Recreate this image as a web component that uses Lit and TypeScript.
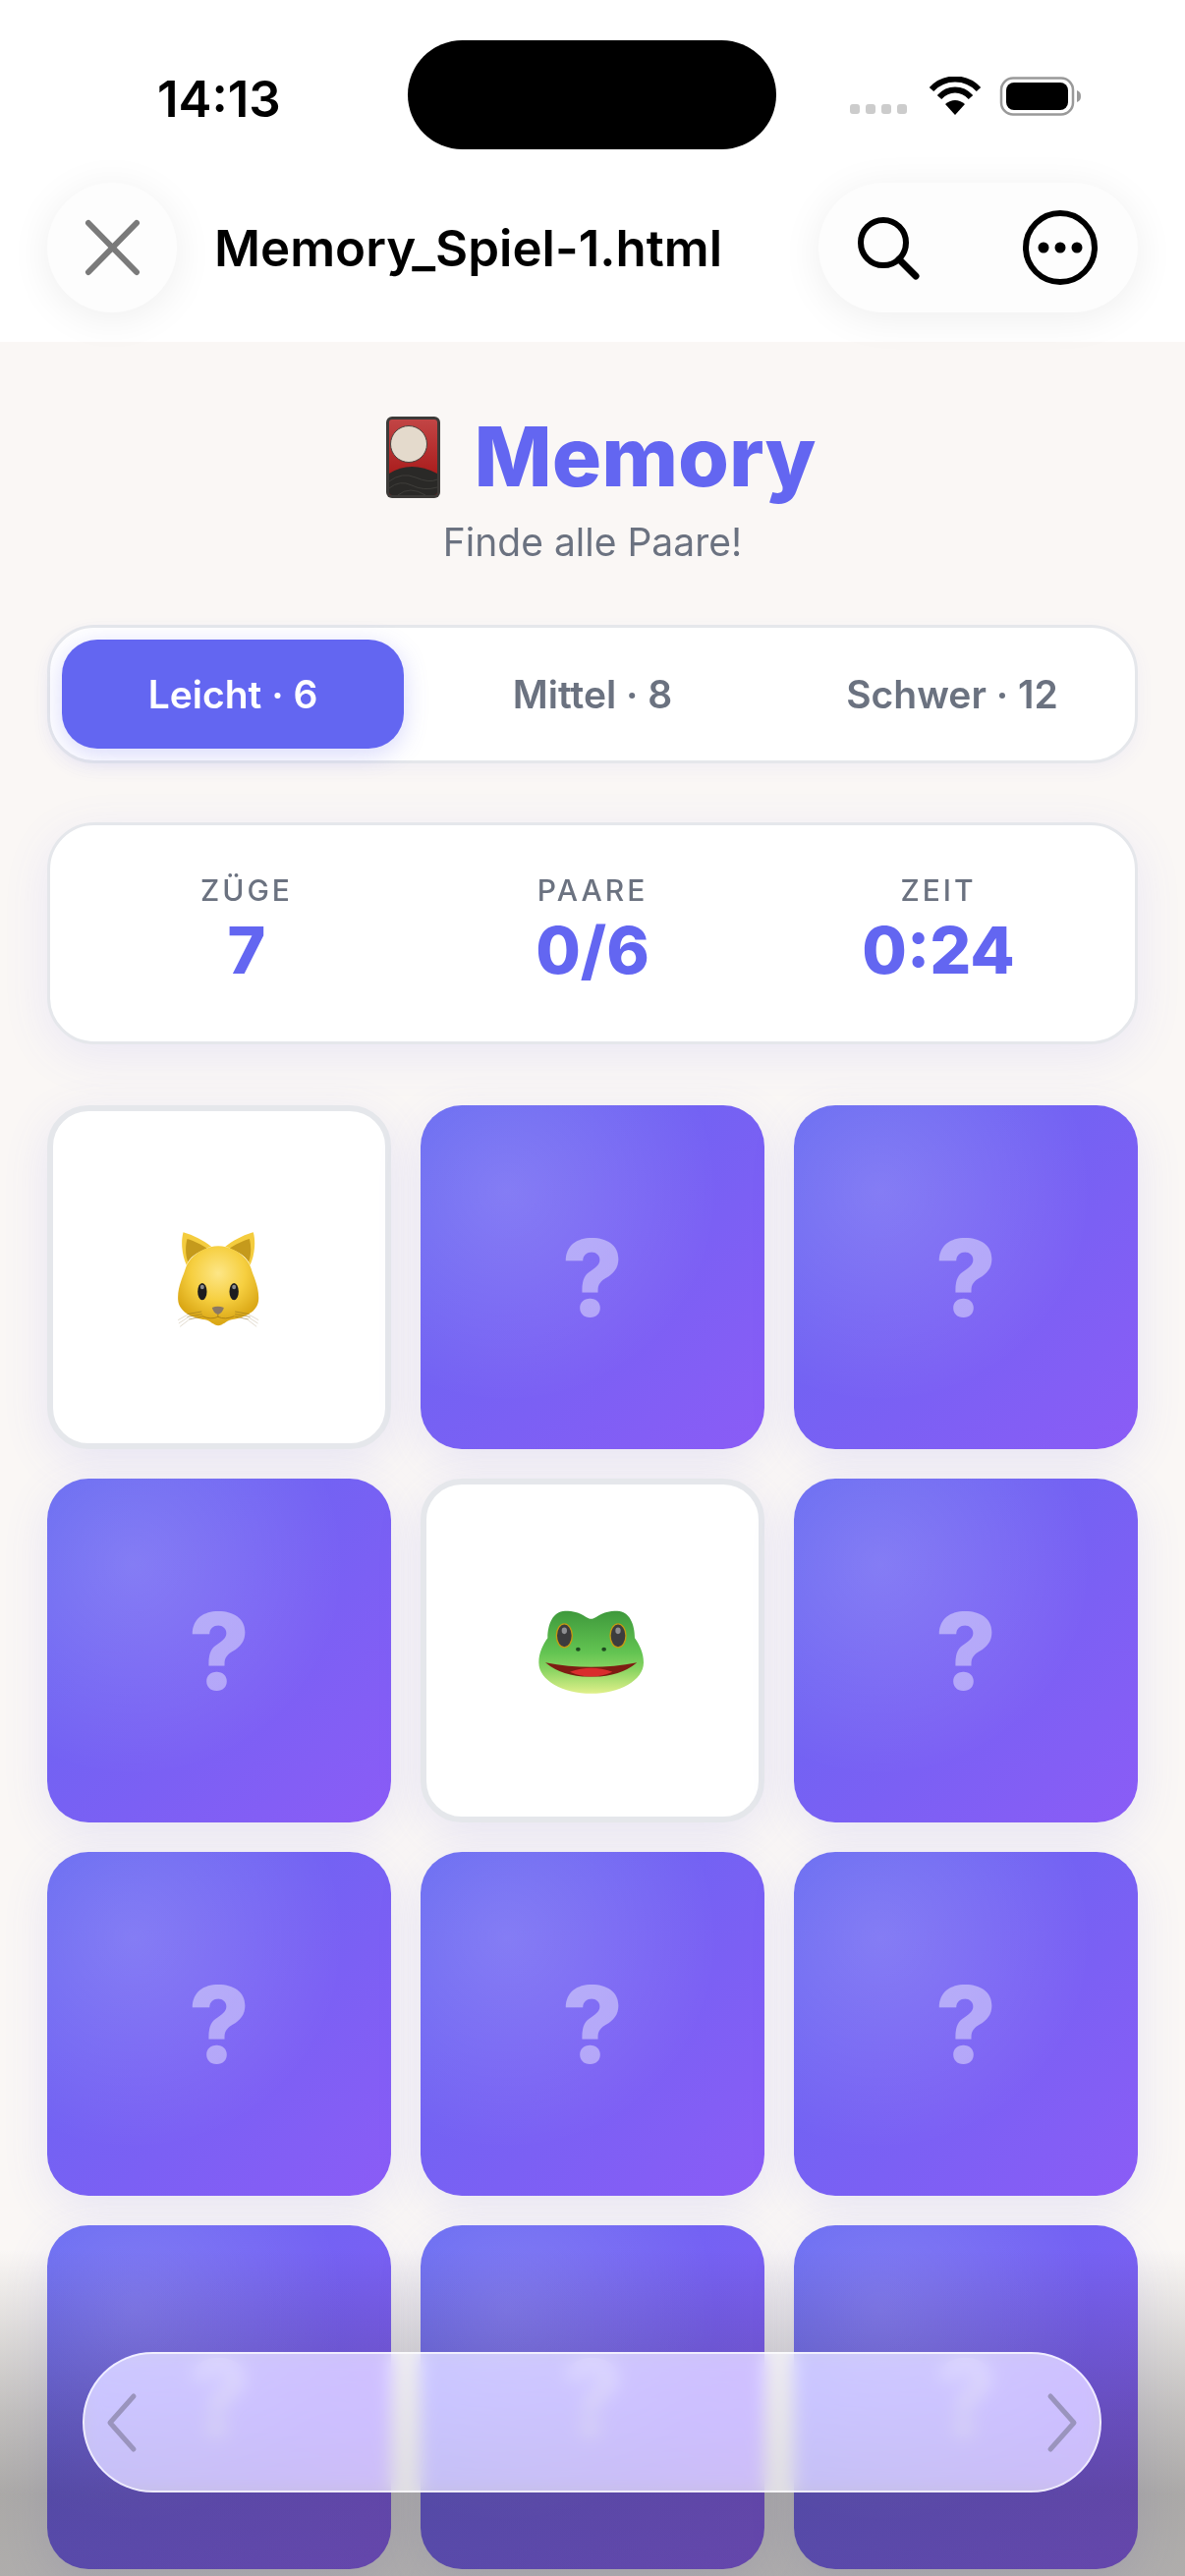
import { LitElement, css, html, svg } from "lit";
import { customElement } from "lit/decorators.js";

type Card = "back" | "cat" | "frog";

const CARDS: Card[] = ["cat", "back", "back", "back", "frog", "back", "back", "back", "back", "back", "back", "back"];
const TABS = ["Leicht · 6", "Mittel · 8", "Schwer · 12"];
const STATS = [
  { label: "ZÜGE", value: "7" },
  { label: "PAARE", value: "0/6" },
  { label: "ZEIT", value: "0:24" }
];

const hanafuda = html`<svg class="flower" viewBox="0 0 55 83">
  <defs>
    <linearGradient id="red" x1="0" y1="0" x2="0" y2="1">
      <stop offset="0" stop-color="#c24545" />
      <stop offset="0.7" stop-color="#ab1e1e" />
    </linearGradient>
  </defs>
  <rect width="55" height="83" rx="6" fill="#3c3a38" />
  <rect x="3" y="3" width="49" height="77" rx="3" fill="url(#red)" />
  <circle cx="23" cy="28" r="18.5" fill="#e4dacc" stroke="#4b4541" stroke-width="1" />
  <path d="M3 58Q25 44 52 58V77Q52 80 49 80H6Q3 80 3 77Z" fill="#2a2927" />
  <path d="M3 66Q16 56 30 62T52 64M3 73Q14 64 26 70T52 72M12 80Q24 70 40 80" fill="none" stroke="#44423f" stroke-width="0.8" />
</svg>`;

const cat = svg`<svg class="emoji" viewBox="7.5 27 480 480">
  <defs>
    <radialGradient id="catHead" gradientUnits="userSpaceOnUse" cx="245" cy="255" r="150">
      <stop offset="0" stop-color="#fde687" />
      <stop offset="0.55" stop-color="#f6cf40" />
      <stop offset="1" stop-color="#dba816" />
    </radialGradient>
  </defs>
  <path d="M138 130C168 138 200 155 224 174C190 180 160 200 148 230C134 200 130 160 138 130Z" fill="#f4cc3e" />
  <path d="M352 130C322 138 290 155 266 174C300 180 330 200 342 230C356 200 360 160 352 130Z" fill="#f4cc3e" />
  <path d="M150 150C170 156 195 168 212 180C185 188 165 200 152 220C144 198 144 172 150 150Z" fill="#c59a1c" />
  <path d="M340 150C320 156 295 168 278 180C305 188 325 200 338 220C346 198 346 172 340 150Z" fill="#c59a1c" />
  <path d="M245 172C290 172 335 205 345 240C352 265 370 295 368 335C366 375 320 392 285 397C270 400 258 415 245 415C232 415 220 400 205 397C170 392 124 375 122 335C120 295 138 265 145 240C155 205 200 172 245 172Z" fill="url(#catHead)" />
  <ellipse cx="196" cy="311" rx="14" ry="26" fill="#1d1d1f" />
  <ellipse cx="293" cy="311" rx="14" ry="26" fill="#1d1d1f" />
  <ellipse cx="196" cy="297" rx="6" ry="7" fill="#8d8d90" />
  <ellipse cx="293" cy="297" rx="6" ry="7" fill="#8d8d90" />
  <path d="M226 360Q243 352 262 360Q258 376 244 381Q230 376 226 360Z" fill="#8b7864" />
  <path d="M244 381V388M196 386Q222 398 244 388Q266 398 294 386" fill="none" stroke="#a27a14" stroke-width="2.5" />
  <path d="M150 380L194 372M150 388L196 380M155 396L196 387M296 372L340 380M296 380L342 388M296 387L337 396" stroke="#8a6d22" stroke-width="1.6" fill="none" />
  <path d="M122 398L150 382M124 408L152 390M128 418L154 398M368 398L340 382M366 408L338 390M362 418L336 398" stroke="#c8bba2" stroke-width="1.6" fill="none" />
</svg>`;

const frog = svg`<svg class="emoji" viewBox="9 -31.5 480 480">
  <defs>
    <linearGradient id="frogSkin" gradientUnits="userSpaceOnUse" x1="0" y1="90" x2="0" y2="340">
      <stop offset="0" stop-color="#3f9a3c" />
      <stop offset="0.5" stop-color="#63c452" />
      <stop offset="0.72" stop-color="#8cd563" />
      <stop offset="1" stop-color="#e0f08a" />
    </linearGradient>
  </defs>
  <path d="M245 112C262 112 272 88 325 88C362 88 378 130 378 170C392 190 405 215 405 245C405 300 330 340 245 340C160 340 85 300 85 245C85 215 98 190 112 170C112 130 128 88 165 88C218 88 228 112 245 112Z" fill="url(#frogSkin)" />
  <ellipse cx="163" cy="163" rx="24" ry="36" fill="#3c3c3e" stroke="#c59a12" stroke-width="4" />
  <ellipse cx="327" cy="163" rx="24" ry="36" fill="#3c3c3e" stroke="#c59a12" stroke-width="4" />
  <ellipse cx="163" cy="148" rx="8" ry="10" fill="#8f8f92" />
  <ellipse cx="327" cy="148" rx="8" ry="10" fill="#8f8f92" />
  <ellipse cx="205" cy="205" rx="7" ry="6" fill="#1f4a20" />
  <ellipse cx="284" cy="205" rx="7" ry="6" fill="#1f4a20" />
  <path d="M105 245Q245 272 385 245Q330 290 245 288Q160 290 105 245Z" fill="#7e1c12" />
  <path d="M180 274Q245 250 310 274Q280 288 245 288Q210 288 180 274Z" fill="#d92d2d" />
</svg>`;

@customElement("app-root")
export class AppRoot extends LitElement {
  static styles = css`
    :host {
      display: block;
      position: relative;
      width: 1206px;
      height: 2622px;
      overflow: hidden;
      background: #faf7f5;
      font-family: Inter, "Liberation Sans", sans-serif;
    }
    svg {
      display: block;
    }
    .top {
      height: 348px;
      box-sizing: border-box;
      background: #fff;
      padding: 41px 48px 0;
    }
    .status {
      display: flex;
      align-items: flex-start;
      height: 111px;
    }
    .time {
      width: 367px;
      padding: 29px 0 0 112px;
      box-sizing: border-box;
      font-size: 51px;
      line-height: 62px;
      font-weight: 600;
      color: #000;
    }
    .island {
      width: 375px;
      height: 111px;
      border-radius: 56px;
      background: #000;
    }
    .indicators {
      display: flex;
      padding: 37px 0 0 75px;
      gap: 0;
    }
    .nav {
      display: flex;
      align-items: center;
      margin-top: 34px;
    }
    .round {
      width: 132px;
      height: 132px;
      border-radius: 66px;
      background: #fdfdfd;
      box-shadow: 0 6px 42px rgba(0, 0, 0, 0.07);
      display: flex;
      align-items: center;
      justify-content: center;
    }
    .file {
      flex: 1;
      margin-left: 38px;
      font-size: 51px;
      font-weight: 600;
      color: #000;
    }
    .actions {
      width: 325px;
      height: 132px;
      border-radius: 66px;
      background: #fdfdfd;
      box-shadow: 0 6px 42px rgba(0, 0, 0, 0.07);
      display: flex;
      align-items: center;
      justify-content: space-between;
      box-sizing: border-box;
      padding: 0 41px 0 38px;
    }
    .page {
      padding: 66px 48px 0;
    }
    .heading {
      text-align: center;
    }
    h1 {
      margin: 0;
      display: flex;
      justify-content: center;
      align-items: center;
      gap: 34px;
      font-size: 84px;
      line-height: 102px;
      font-weight: 800;
      color: #6366f1;
      padding-left: 18px;
    }
    .flower {
      width: 55px;
      height: 83px;
    }
    .sub {
      margin-top: 12px;
      font-size: 39px;
      line-height: 48px;
      color: #6b7280;
    }
    .tabs {
      margin-top: 60px;
      display: grid;
      grid-template-columns: repeat(3, 1fr);
      gap: 18px;
      padding: 12px;
      height: 141px;
      box-sizing: border-box;
      background: #fff;
      border: 3px solid #e5e7eb;
      border-radius: 48px;
      box-shadow: 0 6px 18px rgba(99, 102, 241, 0.06);
    }
    .tab {
      display: flex;
      align-items: center;
      justify-content: center;
      border-radius: 36px;
      font-size: 39px;
      font-weight: 600;
      color: #6b7280;
    }
    .tab.on {
      background: #6366f1;
      color: #fff;
      box-shadow: 0 6px 24px rgba(99, 102, 241, 0.25);
    }
    .stats {
      margin-top: 60px;
      display: grid;
      grid-template-columns: repeat(3, 1fr);
      gap: 48px;
      height: 226px;
      box-sizing: border-box;
      padding: 48px;
      background: #fff;
      border: 3px solid #e5e7eb;
      border-radius: 48px;
      box-shadow: 0 12px 48px rgba(99, 102, 241, 0.1);
      text-align: center;
    }
    .label {
      font-size: 30px;
      line-height: 36px;
      font-weight: 500;
      letter-spacing: 3px;
      color: #6b7280;
    }
    .value {
      margin-top: 3px;
      font-size: 66px;
      line-height: 80px;
      font-weight: 800;
      color: #6366f1;
    }
    .board {
      margin-top: 62px;
      display: grid;
      grid-template-columns: repeat(3, 350px);
      grid-auto-rows: 350px;
      gap: 30px;
    }
    .card {
      display: flex;
      align-items: center;
      justify-content: center;
      box-sizing: border-box;
      border-radius: 42px;
      box-shadow: 0 12px 48px rgba(99, 102, 241, 0.12);
    }
    .card.back {
      background: radial-gradient(circle at 25% 25%, rgba(255, 255, 255, 0.16), rgba(255, 255, 255, 0) 58%),
        linear-gradient(135deg, #6366f1, #8b5cf6);
      font-size: 108px;
      font-weight: 800;
      color: rgba(255, 255, 255, 0.42);
    }
    .card.open {
      background: #fff;
      border: 6px solid #e5e7eb;
    }
    .emoji {
      width: 160px;
      height: 160px;
    }
    .fade {
      position: absolute;
      left: 0;
      right: 0;
      bottom: 0;
      height: 332px;
      background: linear-gradient(
        to bottom,
        rgba(30, 30, 30, 0),
        rgba(30, 30, 30, 0.13) 25%,
        rgba(30, 30, 30, 0.26) 50%,
        rgba(30, 30, 30, 0.36) 75%,
        rgba(30, 30, 30, 0.34)
      );
    }
    .glass {
      position: absolute;
      left: 84px;
      top: 2394px;
      width: 1037px;
      height: 143px;
      box-sizing: border-box;
      display: flex;
      align-items: center;
      justify-content: space-between;
      padding: 0 21px;
      border-radius: 72px;
      border: 2.5px solid rgba(255, 255, 255, 0.7);
      background: rgba(255, 255, 255, 0.66);
      backdrop-filter: blur(9px) saturate(1.7);
    }
  `;

  private renderCard(card: Card) {
    if (card === "back") return html`<div class="card back">?</div>`;
    return html`<div class="card open">${card === "cat" ? cat : frog}</div>`;
  }

  render() {
    return html`
      <header class="top">
        <div class="status">
          <div class="time">14:13</div>
          <div class="island"></div>
          <div class="indicators">
            <svg width="240" height="44" viewBox="0 0 240 44">
              <g fill="#cccccc">
                <rect x="0" y="28" width="10" height="10" rx="3" />
                <rect x="16" y="28" width="10" height="10" rx="3" />
                <rect x="32" y="28" width="10" height="10" rx="3" />
                <rect x="48" y="28" width="10" height="10" rx="3" />
              </g>
              <g fill="none" stroke="#000" stroke-width="6">
                <path d="M83 13C96 -1 118 -1 131 13" />
                <path d="M91 21C100 11 114 11 123 21" />
              </g>
              <path d="M97 28Q107 20 117 28L107 39Z" fill="#000" />
              <rect x="154" y="1.5" width="73" height="37" rx="12" fill="#fff" stroke="#999" stroke-width="2.5" />
              <rect x="159" y="6" width="63" height="28" rx="8" fill="#000" />
              <path d="M231 14C234 15 235 17 235 20C235 23 234 25 231 26Z" fill="#999" />
            </svg>
          </div>
        </div>
        <nav class="nav">
          <div class="round">
            <svg width="60" height="60" viewBox="0 0 60 60" fill="none" stroke="#7a7a7a" stroke-width="6" stroke-linecap="round">
              <path d="M6 5L55 55M55 5L6 55" />
            </svg>
          </div>
          <div class="file">Memory_Spiel-1.html</div>
          <div class="actions">
            <svg width="66" height="66" viewBox="0 0 66 66" fill="none" stroke="#000" stroke-width="6" stroke-linecap="round">
              <circle cx="28" cy="28" r="23" />
              <path d="M44 45L61 62" stroke-width="7" />
            </svg>
            <svg width="76" height="76" viewBox="0 0 76 76">
              <circle cx="38" cy="38" r="35" fill="none" stroke="#000" stroke-width="6" />
              <circle cx="21" cy="38" r="5.5" />
              <circle cx="38" cy="38" r="5.5" />
              <circle cx="55" cy="38" r="5.5" />
            </svg>
          </div>
        </nav>
      </header>
      <main class="page">
        <div class="heading">
          <h1>${hanafuda}<span>Memory</span></h1>
          <div class="sub">Finde alle Paare!</div>
        </div>
        <div class="tabs">
          ${TABS.map((tab, i) => html`<div class="tab ${i === 0 ? "on" : ""}">${tab}</div>`)}
        </div>
        <div class="stats">
          ${STATS.map(
            (stat) => html`<div>
              <div class="label">${stat.label}</div>
              <div class="value">${stat.value}</div>
            </div>`
          )}
        </div>
        <div class="board">${CARDS.map((card) => this.renderCard(card))}</div>
      </main>
      <div class="fade"></div>
      <div class="glass">
        <svg width="34" height="62" viewBox="0 0 34 62" fill="none" stroke="#9a94bd" stroke-width="5" stroke-linecap="round" stroke-linejoin="round">
          <path d="M29 4L5 31L29 58" />
        </svg>
        <svg width="34" height="62" viewBox="0 0 34 62" fill="none" stroke="#9a94bd" stroke-width="5" stroke-linecap="round" stroke-linejoin="round">
          <path d="M5 4L29 31L5 58" />
        </svg>
      </div>
    `;
  }
}
